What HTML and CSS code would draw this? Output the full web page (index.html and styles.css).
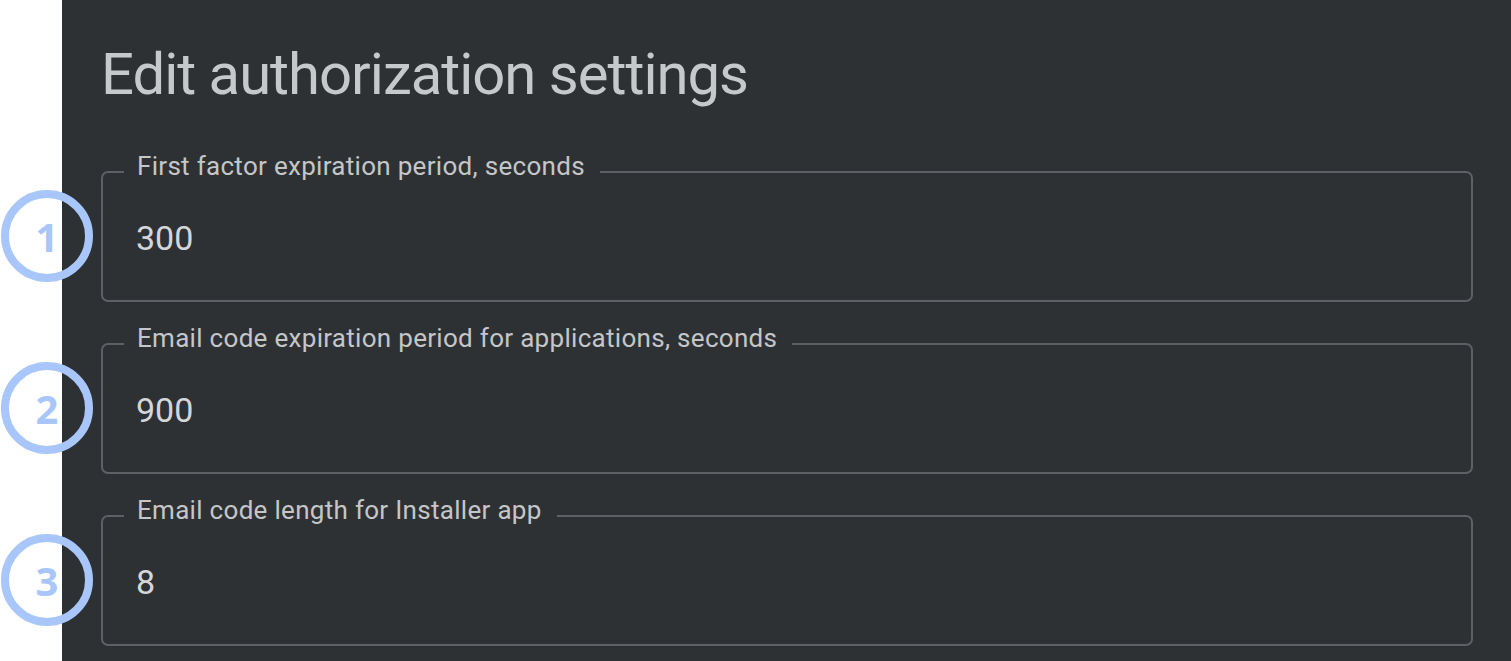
FILE: index.html
```html
<!DOCTYPE html>
<html lang="en">
<head>
    <meta charset="UTF-8">
    <meta name="viewport" content="width=device-width, initial-scale=1.0">
    <title>Edit authorization settings</title>
    <link rel="stylesheet" href="styles.css">
</head>
<body>
    <div class="panel">
        <h1 class="title">Edit authorization settings</h1>

        <form class="settings-form">
            <div class="setting">
                <span class="step">1</span>
                <fieldset class="field">
                    <legend>First factor expiration period, seconds</legend>
                    <input type="text" class="field-input" value="300">
                </fieldset>
            </div>

            <div class="setting">
                <span class="step">2</span>
                <fieldset class="field">
                    <legend>Email code expiration period for applications, seconds</legend>
                    <input type="text" class="field-input" value="900">
                </fieldset>
            </div>

            <div class="setting">
                <span class="step">3</span>
                <fieldset class="field">
                    <legend>Email code length for Installer app</legend>
                    <input type="text" class="field-input" value="8">
                </fieldset>
            </div>
        </form>
    </div>
</body>
</html>
```

FILE: styles.css
```css
* {
    margin: 0;
    padding: 0;
    box-sizing: border-box;
}

html, body {
    height: 100%;
}

body {
    background: #ffffff;
    font-family: 'Roboto', 'Liberation Sans', sans-serif;
    overflow: hidden;
}

.panel {
    margin-left: 62px;
    min-height: 100%;
    background: #2e3134;
    padding: 38px 38px 0 39px;
}

.title {
    font-size: 58px;
    line-height: 72px;
    font-weight: 400;
    letter-spacing: -1px;
    color: #c6c8ca;
    margin-bottom: 44px;
}

.setting {
    position: relative;
    margin-bottom: 24px;
}

.field {
    border: 2px solid #5d6064;
    border-radius: 7px;
    padding: 0 12px 0 21px;
    height: 148px;
}

.field legend {
    font-size: 26px;
    line-height: 24px;
    letter-spacing: 0.3px;
    color: #c4c6c8;
    padding: 0 15px 12px 13px;
}

.field-input {
    display: block;
    width: 100%;
    background: transparent;
    border: none;
    outline: none;
    font-family: 'Roboto', 'Liberation Sans', sans-serif;
    font-size: 34px;
    line-height: 40px;
    height: 40px;
    padding-left: 12px;
    color: #d4d6d8;
    margin-top: 28px;
}

/* numbered markers drawn over the left edge */
.step {
    position: absolute;
    left: -100px;
    top: 36px;
    width: 92px;
    height: 92px;
    border: 8px solid #a8c6fa;
    border-radius: 50%;
    display: flex;
    align-items: center;
    justify-content: center;
    font-family: 'Open Sans', sans-serif;
    font-weight: 700;
    font-size: 40px;
    color: #a8c6fa;
}
```
